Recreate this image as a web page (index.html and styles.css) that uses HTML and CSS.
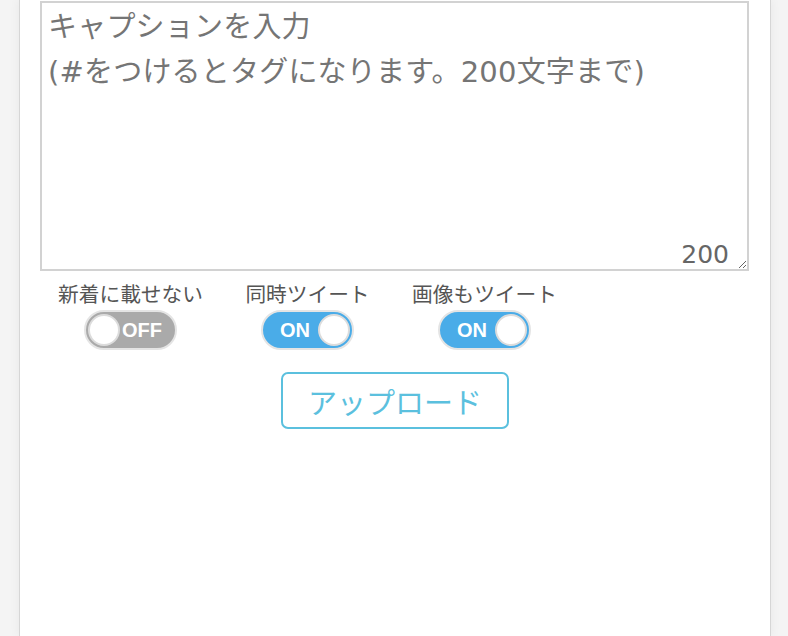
FILE: index.html
```html
<!DOCTYPE html>
<html lang="ja">
<head>
<meta charset="utf-8">
<link rel="stylesheet" href="styles.css">
</head>
<body>
<div class="panel">
  <div class="caption-box">
    <textarea class="caption" placeholder="キャプションを入力&#10;(#をつけるとタグになります。200文字まで)"></textarea>
    <span class="counter">200</span>
  </div>
  <div class="options">
    <div class="option">
      <span class="option-label">新着に載せない</span>
      <span class="toggle off"><span class="knob"></span><span class="toggle-text">OFF</span></span>
    </div>
    <div class="option">
      <span class="option-label">同時ツイート</span>
      <span class="toggle on"><span class="toggle-text">ON</span><span class="knob"></span></span>
    </div>
    <div class="option">
      <span class="option-label">画像もツイート</span>
      <span class="toggle on"><span class="toggle-text">ON</span><span class="knob"></span></span>
    </div>
  </div>
  <div class="actions">
    <button class="upload">アップロード</button>
  </div>
</div>
</body>
</html>
```

FILE: styles.css
```css
html, body {
  margin: 0;
  padding: 0;
  height: 100%;
}
body {
  background: #f4f4f4;
  font-family: "DejaVu Sans", "Noto Sans CJK JP", sans-serif;
  overflow: hidden;
}
.panel {
  box-sizing: border-box;
  margin-left: 19px;
  width: 752px;
  height: 100%;
  background: #fff;
  border-left: 1px solid #d6d6d6;
  border-right: 1px solid #d6d6d6;
  box-shadow: 0 0 10px rgba(0,0,0,0.06);
  padding: 1px 20px 0 20px;
}
.caption-box {
  position: relative;
}
.caption {
  display: block;
  box-sizing: border-box;
  width: 709px;
  height: 270px;
  border: 2px solid #d2d2d2;
  border-radius: 0;
  margin: 0;
  padding: 2px 6px 0;
  font-family: "DejaVu Sans", "Noto Sans CJK JP", sans-serif;
  font-size: 29px;
  line-height: 45px;
  letter-spacing: 0.2px;
  color: #333;
  outline: none;
}
.caption::placeholder {
  color: #757575;
}
.counter {
  position: absolute;
  right: 21px;
  bottom: 1px;
  font-family: "DejaVu Sans", sans-serif;
  font-size: 25px;
  line-height: 30px;
  color: #666;
}
.options {
  display: flex;
  padding-left: 2px;
  margin-top: 10px;
}
.option {
  width: 177px;
  display: flex;
  flex-direction: column;
  align-items: center;
  gap: 5px;
}
.option-label {
  font-family: "Noto Sans CJK JP", sans-serif;
  font-size: 20.7px;
  line-height: 24px;
  color: #555;
}
.toggle {
  box-sizing: border-box;
  width: 93px;
  height: 40px;
  border-radius: 20px;
  border: 2px solid #e4e4e4;
  display: flex;
  align-items: center;
  padding: 0 2px;
  gap: 2px;
}
.toggle.off {
  background: #aaaaaa;
}
.toggle.on {
  background: #4aace8;
  justify-content: flex-end;
  gap: 8px;
}
.knob {
  box-sizing: border-box;
  width: 32px;
  height: 32px;
  border-radius: 50%;
  background: #fff;
  border: 2px solid #dcdcdc;
  flex: none;
}
.toggle-text {
  color: #fff;
  font-family: "Liberation Sans", sans-serif;
  font-weight: 700;
  font-size: 20px;
  line-height: 24px;
}
.actions {
  display: flex;
  justify-content: center;
  margin-top: 22px;
}
.upload {
  box-sizing: border-box;
  width: 228px;
  height: 57px;
  background: #fff;
  border: 2px solid #5bc0de;
  border-radius: 7px;
  color: #5bc0de;
  font-family: "Noto Sans CJK JP", sans-serif;
  font-size: 29px;
  padding: 0;
}
```
